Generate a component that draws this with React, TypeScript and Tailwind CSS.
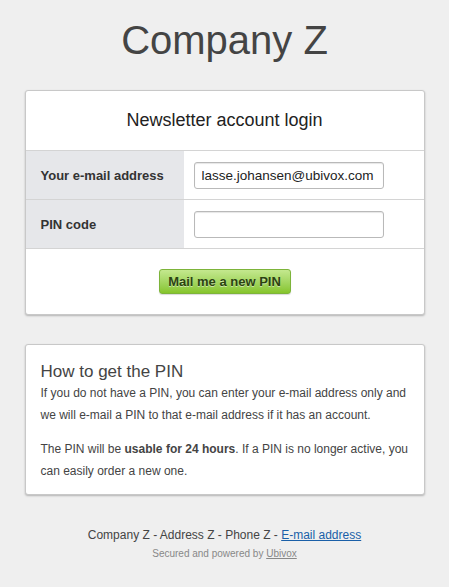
const font = { fontFamily: '"Liberation Sans", Arial, sans-serif' };

export default function App() {
  return (
    <div className="min-h-[587px] bg-[#efefef] pt-[17px] pb-6 text-[#444]" style={font}>
      <h1 className="text-center text-[40px] leading-[46px] text-[#444]">Company Z</h1>

      <div className="mx-auto mt-[27px] w-[400px] rounded-[3px] border border-[#c8c8c8] bg-white shadow-[0_1px_2px_rgba(0,0,0,0.25)]">
        <div className="flex h-[60px] items-center justify-center border-b border-[#d4d4d4] text-[18px] text-[#222]">
          Newsletter account login
        </div>
        <div className="flex h-[49px] border-b border-[#d4d4d4]">
          <div className="flex w-[158px] items-center bg-[#e6e7ea] pl-[15px] pt-[2px] text-[13px] font-bold text-[#333]">
            Your e-mail address
          </div>
          <div className="flex items-center pl-[10px]">
            <input
              defaultValue="lasse.johansen@ubivox.com"
              className="h-[27px] w-[190px] rounded-[3px] border border-[#b9b9b9] bg-white px-[7px] text-[13.5px] text-[#222] shadow-[inset_0_1px_1px_rgba(0,0,0,0.1)] outline-none"
              style={font}
            />
          </div>
        </div>
        <div className="flex h-[49px] border-b border-[#d4d4d4]">
          <div className="flex w-[158px] items-center bg-[#e6e7ea] pl-[15px] pt-[2px] text-[13px] font-bold text-[#333]">
            PIN code
          </div>
          <div className="flex items-center pl-[10px]">
            <input
              className="h-[27px] w-[190px] rounded-[3px] border border-[#b9b9b9] bg-white px-[7px] text-[13.5px] shadow-[inset_0_1px_1px_rgba(0,0,0,0.1)] outline-none"
              style={font}
            />
          </div>
        </div>
        <div className="flex h-[65px] items-center justify-center">
          <button
            type="button"
            className="h-[25px] w-[132px] rounded-[3px] border border-[#7db43a] bg-gradient-to-b from-[#c4e88e] to-[#86c529] text-[13px] font-bold text-[#2b4211] [text-shadow:0_1px_0_rgba(255,255,255,0.5)] shadow-[0_1px_1px_rgba(0,0,0,0.15)]"
            style={font}
          >
            Mail me a new PIN
          </button>
        </div>
      </div>

      <div className="mx-auto mt-[29px] w-[400px] rounded-[3px] border border-[#c8c8c8] bg-white px-[15px] pt-[16px] pb-[12px] shadow-[0_1px_2px_rgba(0,0,0,0.25)]">
        <h2 className="text-[17px] leading-[22px] text-[#444]">How to get the PIN</h2>
        <p className="mt-[-1px] text-[12px] leading-[22px] text-[#444]">
          If you do not have a PIN, you can enter your e-mail address only and we will e-mail a PIN to that e-mail address if it has an account.
        </p>
        <p className="mt-[12px] text-[12px] leading-[22px] text-[#444]">
          The PIN will be <b>usable for 24 hours</b>. If a PIN is no longer active, you can easily order a new one.
        </p>
      </div>

      <div className="mt-[32px] text-center text-[12px] leading-[16px] text-[#444]">
        Company Z - Address Z - Phone Z - <a href="#" className="text-[#1a5fa8] underline">E-mail address</a>
      </div>
      <div className="mt-[4px] text-center text-[10px] leading-[14px] text-[#888]">
        Secured and powered by <a href="#" className="text-[#888] underline">Ubivox</a>
      </div>
    </div>
  );
}
